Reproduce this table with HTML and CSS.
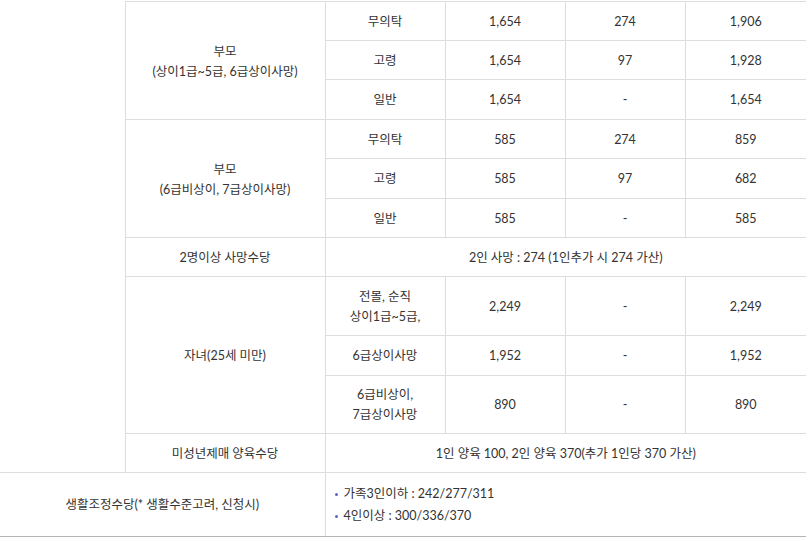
FILE: index.html
```html
<!DOCTYPE html>
<html lang="ko">
<head>
<meta charset="utf-8">
<link rel="stylesheet" href="styles.css">
</head>
<body>
<table class="tbl">
  <colgroup>
    <col class="c0"><col class="c1"><col class="c2"><col class="c3"><col class="c4"><col class="c5">
  </colgroup>
  <tbody>
    <tr>
      <td rowspan="11" class="blank"></td>
      <td rowspan="3">부모<br>(상이1급~5급, 6급상이사망)</td>
      <td>무의탁</td><td>1,654</td><td>274</td><td>1,906</td>
    </tr>
    <tr><td>고령</td><td>1,654</td><td>97</td><td>1,928</td></tr>
    <tr class="tall"><td>일반</td><td>1,654</td><td>-</td><td>1,654</td></tr>
    <tr>
      <td rowspan="3">부모<br>(6급비상이, 7급상이사망)</td>
      <td>무의탁</td><td>585</td><td>274</td><td>859</td>
    </tr>
    <tr class="tall"><td>고령</td><td>585</td><td>97</td><td>682</td></tr>
    <tr><td>일반</td><td>585</td><td>-</td><td>585</td></tr>
    <tr>
      <td>2명이상 사망수당</td>
      <td colspan="4">2인 사망 : 274 (1인추가 시 274 가산)</td>
    </tr>
    <tr>
      <td rowspan="3">자녀(25세 미만)</td>
      <td>전몰, 순직<br>상이1급~5급,</td><td>2,249</td><td>-</td><td>2,249</td>
    </tr>
    <tr class="tall"><td>6급상이사망</td><td>1,952</td><td>-</td><td>1,952</td></tr>
    <tr class="short"><td>6급비상이,<br>7급상이사망</td><td>890</td><td>-</td><td>890</td></tr>
    <tr>
      <td>미성년제매 양육수당</td>
      <td colspan="4">1인 양육 100, 2인 양육 370(추가 1인당 370 가산)</td>
    </tr>
    <tr class="last">
      <td colspan="2">생활조정수당(* 생활수준고려, 신청시)</td>
      <td colspan="4" class="left">
        <ul class="bullets">
          <li>가족3인이하 : 242/277/311</li>
          <li>4인이상 : 300/336/370</li>
        </ul>
      </td>
    </tr>
  </tbody>
</table>
</body>
</html>
```
FILE: styles.css
```css
html, body {
  margin: 0;
  padding: 0;
  background: #fff;
}
body {
  padding-top: 1px;
}
.tbl {
  width: 806px;
  border-collapse: collapse;
  table-layout: fixed;
  font-family: "Lato", "Noto Sans CJK KR", sans-serif;
  font-size: 12.5px;
  line-height: 20px;
  color: #333;
}
.c0 { width: 125px; }
.c1 { width: 200px; }
.c2, .c3, .c4 { width: 120px; }
.c5 { width: 121px; }
.tbl td {
  border: 1px solid #dddddd;
  padding: 10px 6px 8px;
  text-align: center;
  vertical-align: middle;
}
.tbl tr.tall td {
  padding-bottom: 9px;
}
.tbl tr.short td {
  padding-top: 9px;
}
.tbl tr > td:last-child {
  border-right: none;
}
.tbl td.blank {
  border-left: none;
  border-top: none;
}
.tbl tr.last td {
  border-bottom: 1px solid #b4b4b4;
  padding-top: 10px;
  padding-bottom: 9px;
}
.tbl tr.last td:first-child {
  border-left: none;
}
.tbl td.left {
  text-align: left;
  padding-left: 8px;
}
.bullets {
  list-style: none;
  margin: 0;
  padding: 0;
}
.bullets li {
  position: relative;
  padding-left: 10px;
  line-height: 22px;
}
.bullets li::before {
  content: "";
  position: absolute;
  left: 1px;
  top: 10px;
  width: 3px;
  height: 3px;
  border-radius: 50%;
  background: #5f63c0;
}
```
